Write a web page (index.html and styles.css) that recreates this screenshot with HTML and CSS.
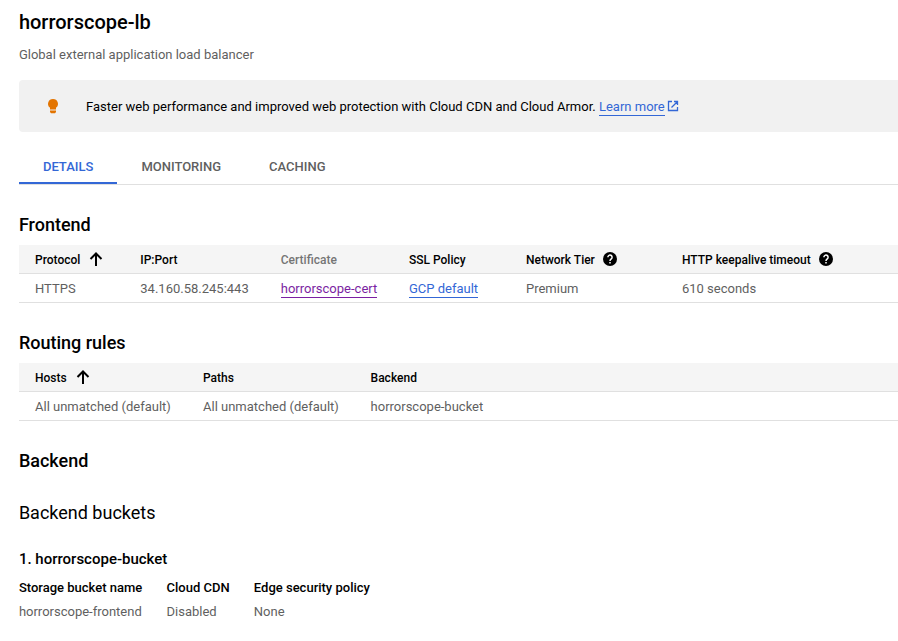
FILE: index.html
```html
<!DOCTYPE html>
<html lang="en">
<head>
<meta charset="utf-8">
<title>Load balancer details</title>
<link rel="stylesheet" href="styles.css">
</head>
<body>
<main>
<h1>horrorscope-lb</h1>
<p class="subtitle">Global external application load balancer</p>
<div class="banner">
<svg class="bulb" width="10" height="15" viewBox="0 0 10 15"><path d="M5 0a4.900 4.900 0 0 0-3 8.800V10.500h6V8.800A4.900 4.900 0 0 0 5 0zM2 11.500h6v1.500l-1 1.300H3l-1-1.300z"/></svg>
<span class="message">Faster web performance and improved web protection with Cloud CDN and Cloud Armor. <a href="#">Learn more</a></span>
<svg class="external" width="12" height="12" viewBox="0 0 12 12"><path d="M5 1.500H1.500v9h9V7M7 1.500h3.500V5M10.300 1.700 4.500 7.500"/></svg>
</div>
<nav class="tabs"><a class="tab active">DETAILS</a><a class="tab">MONITORING</a><a class="tab">CACHING</a></nav>
<h2>Frontend</h2>
<div class="table frontend">
<div class="row head"><span>Protocol<svg class="arrow" width="14" height="14" viewBox="0 0 14 14"><path d="M7 14V2M1.500 7 7 1.500 12.500 7"/></svg></span><span>IP:Port</span><span class="muted">Certificate</span><span>SSL Policy</span><span>Network Tier<svg class="help" width="14" height="14" viewBox="0 0 14 14"><circle cx="7" cy="7" r="7"/><path d="M4.900 5.300a2.100 2.100 0 1 1 3.500 1.500C7.500 7.500 7 7.800 7 8.900M7 10v1.500"/></svg></span><span>HTTP keepalive timeout<svg class="help" width="14" height="14" viewBox="0 0 14 14"><circle cx="7" cy="7" r="7"/><path d="M4.900 5.300a2.100 2.100 0 1 1 3.500 1.500C7.500 7.500 7 7.800 7 8.900M7 10v1.500"/></svg></span></div>
<div class="row"><span>HTTPS</span><span>34.160.58.245:443</span><span><a class="visited" href="#">horrorscope-cert</a></span><span><a href="#">GCP default</a></span><span>Premium</span><span>610 seconds</span></div>
</div>
<h2>Routing rules</h2>
<div class="table routing">
<div class="row head"><span>Hosts<svg class="arrow" width="14" height="14" viewBox="0 0 14 14"><path d="M7 14V2M1.500 7 7 1.500 12.500 7"/></svg></span><span>Paths</span><span>Backend</span></div>
<div class="row"><span>All unmatched (default)</span><span>All unmatched (default)</span><span>horrorscope-bucket</span></div>
</div>
<h2>Backend</h2>
<h3>Backend buckets</h3>
<h4>1. horrorscope-bucket</h4>
<div class="facts">
<b>Storage bucket name</b><b>Cloud CDN</b><b>Edge security policy</b>
<span>horrorscope-frontend</span><span>Disabled</span><span>None</span>
</div>
</main>
</body>
</html>
```
FILE: styles.css
```css
* { box-sizing: border-box; }
body { margin: 0; background: #fff; color: #000; font: 13px/20px Roboto, sans-serif; overflow: hidden; }
main { padding: 10px 0 0 18.900px; }
h1, h2, h3, h4, p { margin: 0; }
h1 { font-size: 20px; line-height: 24px; font-weight: 500; }
.subtitle { margin-top: 11px; color: #5f5f5f; }
.banner { display: flex; align-items: center; height: 52px; margin-top: 15px; padding-left: 29.100px; background: #f1f1f1; border-radius: 4px 0 0 4px; }
.bulb { margin-right: 28px; fill: #e37400; }
.message { padding-top: 2px; }
.external { margin-left: 2.500px; fill: none; stroke: #3367d6; stroke-width: 1.3; }
a { color: #3367d6; text-decoration: none; }
.message a, .row a { border-bottom: 1px solid currentColor; padding-bottom: 1px; }
.row .visited { color: #7b1fa2; }
.tabs { display: flex; height: 35px; margin-top: 18px; border-bottom: 1px solid #e0e0e0; }
.tab { height: 34px; padding: 7px 24px 0; color: #5f5f5f; font-weight: 500; }
.tab.active { color: #3367d6; border-bottom: 2px solid #3367d6; }
h2 { margin-top: 28px; font-size: 18px; line-height: 24px; font-weight: 500; }
.table { margin-top: 8px; }
.row { display: grid; align-items: center; height: 29px; padding: 1px 0 0 16.100px; border-bottom: 1px solid #e0e0e0; color: #5f5f5f; line-height: 21px; white-space: nowrap; }
.frontend .row { grid-template-columns: 105.300px 140.500px 128.200px 117px 156px 1fr; }
.routing .row { grid-template-columns: 168px 167.600px 1fr; }
.row.head { padding-top: 2px; background: #f5f5f5; color: #000; font-size: 12px; line-height: 20px; font-weight: 500; }
.head span { display: flex; align-items: center; }
.head .muted { color: #757575; }
.head svg { margin-bottom: 2px; }
.arrow { margin-left: 9px; fill: none; stroke: #000; stroke-width: 2; }
.help { margin-left: 8px; }
.help path { fill: none; stroke: #fff; stroke-width: 1.500; }
h3 { margin-top: 28px; font-size: 18px; line-height: 24px; font-weight: 400; }
h4 { margin-top: 24px; font-size: 15px; line-height: 20px; font-weight: 500; }
.facts { display: grid; grid-template-columns: max-content max-content max-content; column-gap: 24.200px; row-gap: 4px; margin-top: 9px; color: #5f5f5f; }
.facts b { color: #000; font-weight: 500; }
```
